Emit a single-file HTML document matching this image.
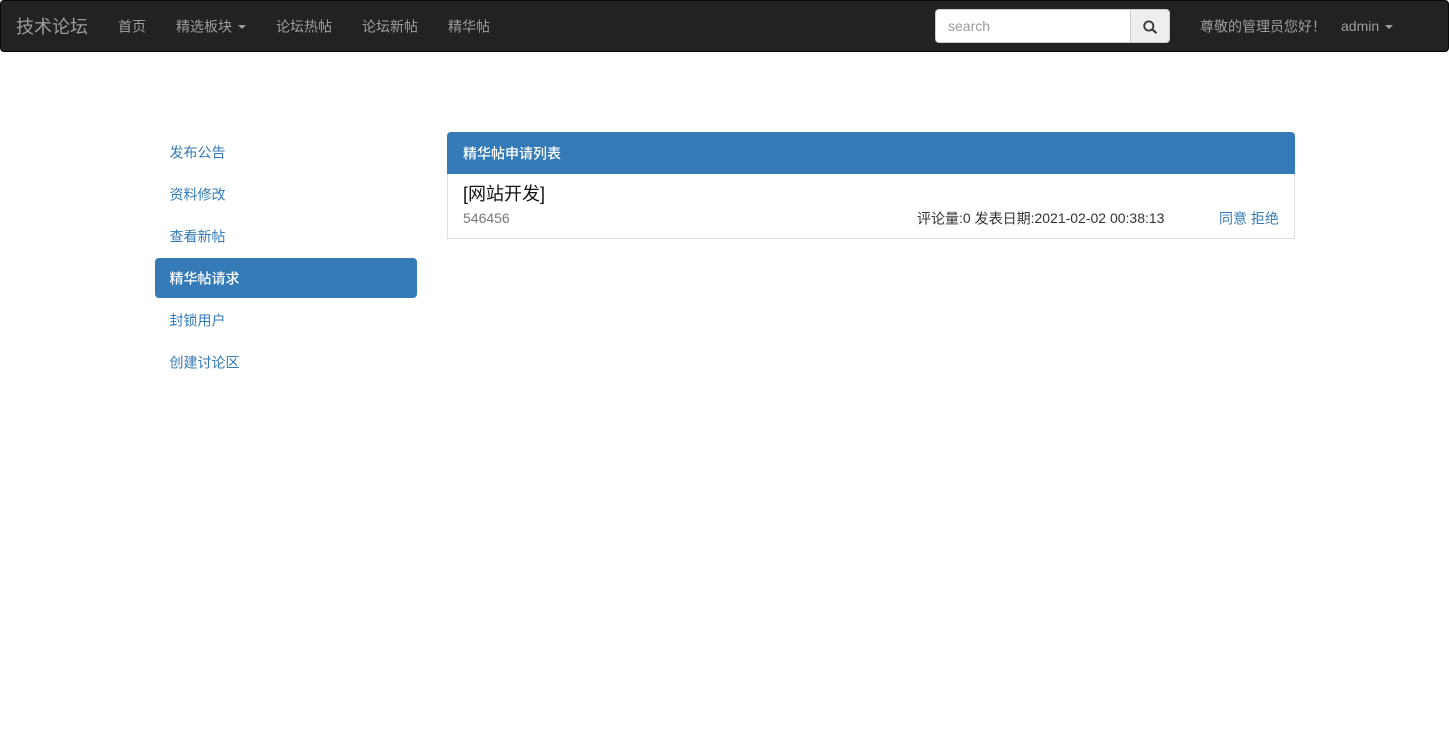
<!DOCTYPE html>
<html lang="zh-CN">
<head>
<meta charset="utf-8">
<title>技术论坛</title>
<style>
*{box-sizing:border-box}
html,body{margin:0;padding:0;width:1449px;height:756px;background:#fff;overflow:hidden}
body{font-family:"Liberation Sans","Noto Sans CJK SC",sans-serif;font-size:14px;line-height:20px;color:#333;position:relative}
a{text-decoration:none;color:#337ab7}
i{font-style:normal;display:inline-block;transform:translateY(.5px)}
.abs{position:absolute;white-space:nowrap}
.nav{position:absolute;left:0;top:0;width:1449px;height:52px;background:#222;border:1px solid #080808;border-radius:4px}
.n{position:absolute;top:16px;height:20px;line-height:20px;color:#9d9d9d;white-space:nowrap}
.caret{display:inline-block;width:0;height:0;margin-left:2px;vertical-align:middle;border-top:4px solid #9d9d9d;border-left:4px solid transparent;border-right:4px solid transparent}
.search{position:absolute;left:935px;top:9px;width:196px;height:34px;background:#fff;border:1px solid #ccc;border-radius:4px 0 0 4px;padding:6px 12px;color:#999;line-height:20px}
.btn{position:absolute;left:1130px;top:9px;width:40px;height:34px;background:#eee;border:1px solid #ccc;border-radius:0 4px 4px 0}
.btn svg{position:absolute;left:11px;top:10px}
.side{position:absolute;left:155px;width:262px;height:40px;padding:10px 14.5px;line-height:20px;border-radius:4px;color:#337ab7;white-space:nowrap}
.side.on{background:#337ab7;color:#fff;font-weight:500}
.ph{position:absolute;left:447px;top:132px;width:848px;height:42px;background:#337ab7;border-radius:4px 4px 0 0;color:#fff;padding:11px 16px;line-height:20px;font-weight:500}
.pb{position:absolute;left:447px;top:174px;width:848px;height:65px;border:1px solid #ddd;border-top:0}
</style>
</head>
<body>
<div class="nav"></div>
<div class="abs" style="left:16px;top:17px;font-size:18px;line-height:20px;color:#9d9d9d;">技术论坛</div>
<div class="n" style="left:118px"><i>首页</i></div>
<div class="n" style="left:176px"><i>精选板块</i> <span class="caret"></span></div>
<div class="n" style="left:276px"><i>论坛热帖</i></div>
<div class="n" style="left:362px"><i>论坛新帖</i></div>
<div class="n" style="left:448px"><i>精华帖</i></div>
<div class="search">search</div>
<div class="btn"><svg width="16" height="15" viewBox="0 0 16 15"><circle cx="6.8" cy="6" r="4.6" fill="none" stroke="#333" stroke-width="1.8"/><path d="M10.3 9.4l3.6 3.2" stroke="#333" stroke-width="2.1" stroke-linecap="round"/></svg></div>
<div class="n" style="left:1200px"><i>尊敬的管理员您好！</i></div>
<div class="n" style="left:1341px">admin <span class="caret"></span></div>

<div class="side" style="top:132px"><i>发布公告</i></div>
<div class="side" style="top:174px"><i>资料修改</i></div>
<div class="side" style="top:216px"><i>查看新帖</i></div>
<div class="side on" style="top:258px"><i>精华帖请求</i></div>
<div class="side" style="top:300px"><i>封锁用户</i></div>
<div class="side" style="top:342px"><i>创建讨论区</i></div>

<div class="ph"><i>精华帖申请列表</i></div>
<div class="pb"></div>
<div class="abs" style="left:463px;top:183px;font-size:18px;line-height:22px;color:#111;">[网站开发]</div>
<div class="abs" style="left:463px;top:208px;color:#777;">546456</div>
<div class="abs" style="left:917px;top:208px;color:#333;"><i>评论量</i>:0 <i>发表日期</i>:2021-02-02 00:38:13</div>
<div class="abs" style="left:1219px;top:208px;"><a><i>同意</i></a> <a><i>拒绝</i></a></div>
</body>
</html>
